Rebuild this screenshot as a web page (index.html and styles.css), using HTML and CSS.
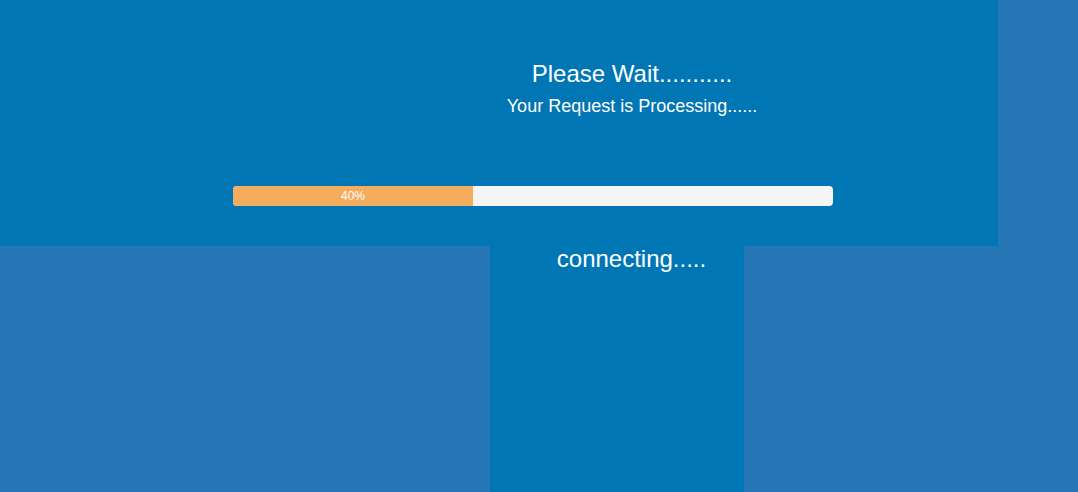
FILE: index.html
```html
<!DOCTYPE html>
<html>
<head>
<meta charset="utf-8">
<link rel="stylesheet" href="styles.css">
</head>
<body>
  <div class="panel">
    <div class="heading">
      <div class="title">Please Wait...........</div>
      <div class="subtitle">Your Request is Processing......</div>
    </div>
    <div class="progress">
      <div class="bar" style="width:40%">40%</div>
    </div>
  </div>
  <div class="column">
    <div class="status">connecting.....</div>
  </div>
</body>
</html>
```
FILE: styles.css
```css
html, body {
  margin: 0;
  padding: 0;
  height: 100%;
}
body {
  background: #2476b4;
  font-family: "Liberation Sans", Arial, sans-serif;
  color: #ffffff;
  display: flex;
  flex-direction: column;
  overflow: hidden;
}
.panel {
  width: 998px;
  height: 246px;
  background: #0076b5;
  display: flex;
  flex-direction: column;
  flex-shrink: 0;
}
.heading {
  width: 502px;
  margin-left: 381px;
  margin-top: 60px;
  text-align: center;
}
.title {
  font-size: 24px;
  line-height: 27px;
}
.subtitle {
  font-size: 18px;
  line-height: 20px;
  margin-top: 9px;
}
.progress {
  margin-left: 233px;
  margin-top: 70px;
  width: 600px;
  height: 20px;
  background: #f5f5f5;
  border-radius: 4px;
  overflow: hidden;
  display: flex;
}
.bar {
  background: #f3ad5c;
  font-size: 12px;
  line-height: 20px;
  text-align: center;
  color: #ffffff;
}
.column {
  margin-left: 490px;
  width: 254px;
  flex: 1;
  background: #0076b5;
  padding-left: 29px;
  box-sizing: border-box;
}
.status {
  font-size: 24px;
  line-height: 25px;
  text-align: center;
}
```
